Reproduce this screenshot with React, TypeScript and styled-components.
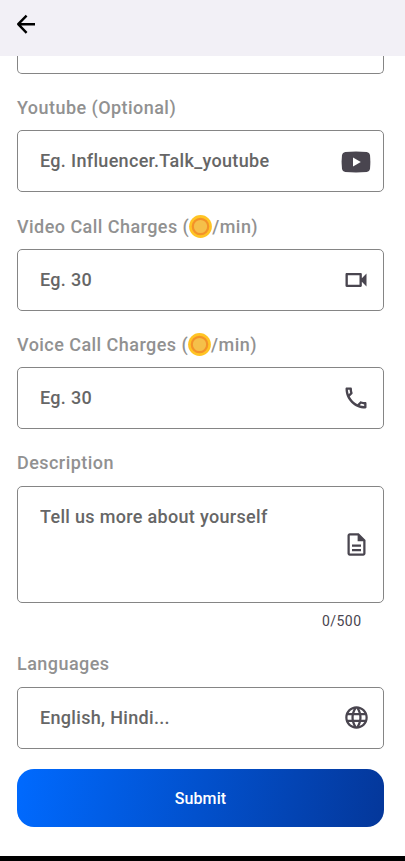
import React from "react";
import styled, { createGlobalStyle, css } from "styled-components";

const GlobalStyle = createGlobalStyle`
  * { box-sizing: border-box; }
  body { margin: 0; background: #fff; font-family: Roboto, sans-serif; }
`;

const Screen = styled.div`
  display: flex;
  flex-direction: column;
  width: 100%;
  height: 861px;
  overflow: hidden;
  background: #fff;
`;

const AppBar = styled.header`
  display: flex;
  align-items: center;
  flex: none;
  height: 56px;
  padding: 0 13px 8px;
  background: #f2f0f6;
`;

const BackButton = styled.button`
  display: flex;
  padding: 0;
  border: 0;
  background: none;
  color: #000;
`;

const Form = styled.main`
  display: flex;
  flex-direction: column;
  flex: 1;
  min-height: 0;
  padding: 0 21px 0 17px;
`;

const outline = css`
  border: 1px solid #858585;
  border-radius: 5px;
`;

const ScrolledField = styled.div`
  ${outline}
  flex: none;
  height: 18px;
  border-top: 0;
  border-top-left-radius: 0;
  border-top-right-radius: 0;
`;

const Label = styled.label<{ $gap?: number }>`
  display: flex;
  align-items: center;
  flex: none;
  height: 22px;
  margin: ${(p) => p.$gap ?? 22.8}px 0 11.6px;
  color: #919191;
  font-size: 18px;
  font-weight: 500;
  letter-spacing: 0.45px;
  white-space: pre;
`;

const Field = styled.div<{ $tall?: boolean }>`
  ${outline}
  display: flex;
  align-items: center;
  flex: none;
  height: ${(p) => (p.$tall ? 117 : 62)}px;
  padding: 0 12px 0 22px;
  color: #49454f;
`;

const entry = css`
  flex: 1;
  min-width: 0;
  padding: 0;
  border: 0;
  outline: 0;
  background: none;
  color: #222;
  font: 500 18px/24px Roboto, sans-serif;
  letter-spacing: 0.32px;
  &::placeholder { color: #666; opacity: 1; }
`;

const Input = styled.input`
  ${entry}
`;

const TextArea = styled.textarea`
  ${entry}
  align-self: stretch;
  padding-top: 18px;
  resize: none;
  overflow: hidden;
`;

const IconSlot = styled.span`
  display: flex;
  justify-content: center;
  flex: none;
  width: 30px;
`;

const Counter = styled.div`
  flex: none;
  height: 20px;
  margin-top: 8px;
  padding-right: 22.5px;
  color: #49454f;
  font-size: 14px;
  line-height: 20px;
  letter-spacing: 0.45px;
  text-align: right;
`;

const Submit = styled.button`
  flex: none;
  height: 58px;
  margin-top: 20.5px;
  padding: 2px 0 0;
  border: 0;
  border-radius: 17px;
  background: linear-gradient(99deg, #006aff, #04379a);
  color: #fff;
  font: 500 16px/24px Roboto, sans-serif;
  letter-spacing: 0.1px;
`;

const NavigationBar = styled.footer`
  flex: none;
  height: 5px;
  background: #000;
`;

const Glyph = ({ d, size = 27 }: { d: string; size?: number }) => (
  <svg width={size} height={size} viewBox="0 0 24 24" fill="currentColor">
    <path d={d} />
  </svg>
);

const VIDEO =
  "M15 8v8H5V8h10m1-2H4c-.55 0-1 .45-1 1v10c0 .55.45 1 1 1h12c.55 0 1-.45 1-1v-3.5l4 4v-11l-4 4V7c0-.55-.45-1-1-1z";
const PHONE =
  "M6.54 5c.06.89.21 1.76.45 2.59l-1.2 1.2c-.41-1.2-.67-2.47-.76-3.79h1.51m9.86 12.02c.85.24 1.72.39 2.6.45v1.49c-1.32-.09-2.59-.35-3.8-.75l1.2-1.19M7.5 3H4c-.55 0-1 .45-1 1 0 9.39 7.61 17 17 17 .55 0 1-.45 1-1v-3.49c0-.55-.45-1-1-1-1.24 0-2.45-.2-3.57-.57-.1-.04-.21-.05-.31-.05-.26 0-.51.1-.71.29l-2.2 2.2c-2.83-1.45-5.15-3.76-6.59-6.59l2.2-2.2c.28-.28.36-.67.25-1.02C8.7 6.45 8.5 5.25 8.5 4c0-.55-.45-1-1-1z";
const DOCUMENT =
  "M8 16h8v2H8zm0-4h8v2H8zm6-10H6c-1.1 0-2 .9-2 2v16c0 1.1.89 2 1.99 2H18c1.1 0 2-.9 2-2V8l-6-6zm4 18H6V4h7v5h5v11z";
const GLOBE =
  "M11.99 2C6.47 2 2 6.48 2 12s4.47 10 9.99 10C17.52 22 22 17.52 22 12S17.52 2 11.99 2zm6.93 6h-2.95c-.32-1.25-.78-2.45-1.38-3.56 1.84.63 3.37 1.91 4.33 3.56zM12 4.04c.83 1.2 1.48 2.53 1.91 3.96h-3.82c.43-1.43 1.08-2.76 1.91-3.96zM4.26 14C4.1 13.36 4 12.69 4 12s.1-1.36.26-2h3.38c-.08.66-.14 1.32-.14 2s.06 1.34.14 2H4.26zm.82 2h2.95c.32 1.25.78 2.45 1.38 3.56-1.84-.63-3.37-1.9-4.33-3.56zm2.95-8H5.08c.96-1.66 2.49-2.93 4.33-3.56C8.81 5.55 8.35 6.75 8.03 8zM12 19.96c-.83-1.2-1.48-2.53-1.91-3.96h3.82c-.43 1.43-1.08 2.76-1.91 3.96zM14.34 14H9.66c-.09-.66-.16-1.32-.16-2s.07-1.35.16-2h4.68c.09.65.16 1.32.16 2s-.07 1.34-.16 2zm.25 5.56c.6-1.11 1.06-2.31 1.38-3.56h2.95c-.96 1.65-2.49 2.93-4.33 3.56zM16.36 14c.08-.66.14-1.32.14-2s-.06-1.34-.14-2h3.38c.16.64.26 1.31.26 2s-.1 1.36-.26 2h-3.38z";

const BackArrow = () => (
  <svg width="26" height="26" viewBox="0 0 26 26" fill="none" stroke="currentColor" strokeWidth="2.4">
    <path d="M22 13.2H6M13.6 4.6L5.2 13.2l8.4 8.6" strokeLinejoin="round" strokeLinecap="butt" />
  </svg>
);

const Youtube = () => (
  <svg width="30" height="23" viewBox="0 0 30 23">
    <path
      fill="currentColor"
      d="M4.2 2Q15 1.1 25.8 2Q28.5 2.3 29 5Q29.8 12 29 19Q28.5 21.7 25.8 22Q15 22.9 4.2 22Q1.5 21.7 1 19Q.2 12 1 5Q1.5 2.3 4.2 2Z"
    />
    <path fill="#fff" d="M12 7.6v9l7.8-4.5z" />
  </svg>
);

const Coin = () => (
  <svg width="23" height="23" viewBox="0 0 23 23">
    <circle cx="11.5" cy="11.5" r="11.4" fill="#ffc424" />
    <circle cx="11.5" cy="11.5" r="7.7" fill="#f5c04a" stroke="#f39229" strokeWidth="2.2" />
  </svg>
);

export default function App() {
  return (
    <Screen>
      <GlobalStyle />
      <AppBar>
        <BackButton aria-label="Back">
          <BackArrow />
        </BackButton>
      </AppBar>
      <Form>
        <ScrolledField />
        <Label htmlFor="youtube">Youtube (Optional)</Label>
        <Field>
          <Input id="youtube" placeholder="Eg. Influencer.Talk_youtube" />
          <IconSlot><Youtube /></IconSlot>
        </Field>
        <Label htmlFor="video">Video Call Charges (<Coin />/min)</Label>
        <Field>
          <Input id="video" placeholder="Eg. 30" />
          <IconSlot><Glyph d={VIDEO} size={28} /></IconSlot>
        </Field>
        <Label htmlFor="voice">Voice Call Charges (<Coin />/min)</Label>
        <Field>
          <Input id="voice" placeholder="Eg. 30" />
          <IconSlot><Glyph d={PHONE} size={28} /></IconSlot>
        </Field>
        <Label htmlFor="description">Description</Label>
        <Field $tall>
          <TextArea id="description" placeholder="Tell us more about yourself" />
          <IconSlot><Glyph d={DOCUMENT} /></IconSlot>
        </Field>
        <Counter>0/500</Counter>
        <Label htmlFor="languages" $gap={22.4}>Languages</Label>
        <Field>
          <Input id="languages" placeholder="English, Hindi..." />
          <IconSlot><Glyph d={GLOBE} /></IconSlot>
        </Field>
        <Submit>Submit</Submit>
      </Form>
      <NavigationBar />
    </Screen>
  );
}
